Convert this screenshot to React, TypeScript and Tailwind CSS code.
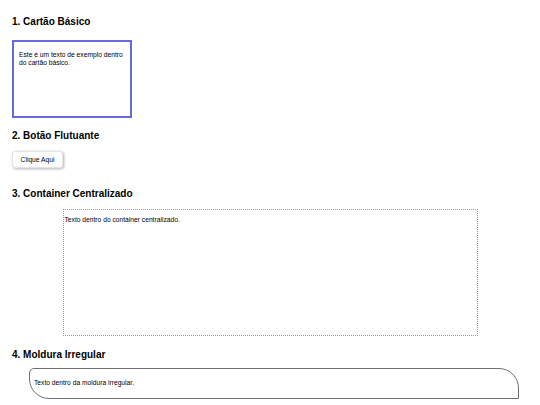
export default function App() {
  return (
    <div
      className="w-[540px] h-[405px] bg-white text-black overflow-hidden px-[12px]"
      style={{ fontFamily: '"Liberation Sans", Arial, sans-serif' }}
    >
      <h2 className="text-[10px] leading-[12px] font-bold pt-[16px]">1. Cartão Básico</h2>
      <div className="mt-[12px] w-[120px] h-[78px] border-2 border-[#6b68dc] px-[5px] pt-[9px]">
        <p className="text-[6.7px] leading-[8px]">Este é um texto de exemplo dentro do cartão básico.</p>
      </div>

      <h2 className="text-[10px] leading-[12px] font-bold mt-[12px]">2. Botão Flutuante</h2>
      <button className="mt-[9px] h-[17px] w-[51px] rounded-[3px] border border-[#e4e4e4] bg-white text-[6.7px] leading-[8px] shadow-[1px_1px_3px_rgba(0,0,0,0.3)]">
        Clique Aqui
      </button>

      <h2 className="text-[10px] leading-[12px] font-bold mt-[19px]">3. Container Centralizado</h2>
      <div className="mt-[9px] mx-auto w-[415px] h-[127px] border border-dotted border-[#9a9a9a] pt-[6px] pl-[1px]">
        <p className="text-[6.7px] leading-[8px]">Texto dentro do container centralizado.</p>
      </div>

      <h2 className="text-[10px] leading-[12px] font-bold mt-[13px]">4. Moldura Irregular</h2>
      <div className="mt-[7px] ml-[17px] w-[490px] h-[31px] border border-[#6f6f6f] rounded-tl-[5px] rounded-tr-[20px] rounded-br-none rounded-bl-[20px] flex items-center pl-[4px]">
        <p className="text-[6.7px] leading-[8px]">Texto dentro da moldura irregular.</p>
      </div>
    </div>
  );
}
